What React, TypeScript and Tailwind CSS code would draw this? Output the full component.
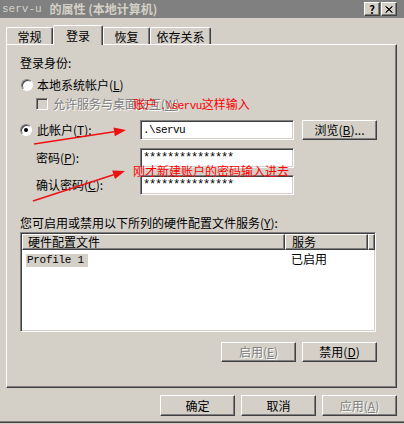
const raised =
  "border border-t-white border-l-white border-r-[#404040] border-b-[#404040] shadow-[inset_-1px_-1px_0_#808080]";
const sunken =
  "border border-t-[#808080] border-l-[#808080] border-r-white border-b-white shadow-[inset_1px_1px_0_#404040,inset_-1px_-1px_0_#d4d0c8]";
const mono = "font-['Liberation_Mono',monospace]";
const grayText = "text-[#808080] [text-shadow:1px_1px_0_#ffffff]";

function Key({ k }: { k: string }) {
  return (
    <>
      (<span className="underline underline-offset-1">{k}</span>)
    </>
  );
}

function Radio({ checked }: { checked?: boolean }) {
  return (
    <span className="flex h-[12px] w-[12px] items-center justify-center rounded-full border border-t-[#808080] border-l-[#808080] border-r-white border-b-white bg-white shadow-[inset_1px_1px_0_#404040]">
      {checked && <span className="h-[4px] w-[4px] rounded-full bg-black" />}
    </span>
  );
}

function Button({
  label,
  disabled,
  className,
}: {
  label: React.ReactNode;
  disabled?: boolean;
  className?: string;
}) {
  return (
    <div
      className={`flex w-[75px] items-center justify-center bg-[#d4d0c8] ${raised} ${
        disabled ? grayText : "text-black"
      } ${className ?? "h-[20px]"}`}
    >
      {label}
    </div>
  );
}

function Edit({ value, stars }: { value: string; stars?: boolean }) {
  return (
    <div
      className={`flex h-[20px] w-[154px] items-center bg-white pl-[2px] ${sunken} ${mono} ${
        stars ? "text-[12px] tracking-[-1.2px]" : "text-[11px] tracking-[-0.6px]"
      }`}
    >
      {value}
    </div>
  );
}

function Tab({ label, active, w }: { label: string; active?: boolean; w: string }) {
  return (
    <div
      className={`flex items-center justify-center rounded-t-[2px] border-t border-l border-r border-t-white border-l-white border-r-[#404040] bg-[#d4d0c8] pt-[1px] shadow-[inset_-1px_0_0_#808080] ${w} ${
        active ? "relative z-10 -mb-[1px] h-[20px]" : "h-[17px]"
      }`}
    >
      {label}
    </div>
  );
}

export default function App() {
  return (
    <div className="relative flex h-[424px] w-[404px] flex-col overflow-hidden bg-[#d4d0c8] font-['Noto_Sans_CJK_SC',sans-serif] text-[12px] leading-[14px] text-black">
      {/* title bar */}
      <div className="flex h-[18px] items-center bg-[#808080] pl-[2px] pr-[7px] text-[#d4d0c8]">
        <span className={`${mono} text-[11px]`}>serv-u</span>
        <span className="ml-[8px] font-bold">的属性 (本地计算机)</span>
        <div className="ml-auto flex gap-[1px]">
          <div className={`flex h-[14px] w-[16px] items-center justify-center bg-[#d4d0c8] ${raised} text-[11px] font-bold leading-none text-black`}>
            ?
          </div>
          <div className={`flex h-[14px] w-[16px] items-center justify-center bg-[#d4d0c8] ${raised}`}>
            <svg width="8" height="7" viewBox="0 0 8 7">
              <path d="M0.5 0.5 L7 6.5 M1.5 0.5 L7.5 6.5 M7 0.5 L0.5 6.5 M7.5 0.5 L1 6.5" stroke="#000" strokeWidth="1" />
            </svg>
          </div>
        </div>
      </div>

      {/* tabs */}
      <div className="mt-[7px] flex h-[19px] items-end pl-[6px]">
        <Tab label="常规" w="w-[47px]" />
        <Tab label="登录" w="w-[50px]" active />
        <Tab label="恢复" w="w-[47px]" />
        <Tab label="依存关系" w="w-[61px]" />
      </div>

      {/* panel */}
      <div className={`ml-[6px] flex h-[344px] w-[391px] flex-col pl-[13px] pr-[19px] pt-[11px] ${raised} bg-[#d4d0c8]`}>
        <div className="h-[14px]">登录身份:</div>

        <div className="mt-[8px] flex h-[14px] items-center">
          <span className="ml-[1px]">
            <Radio />
          </span>
          <span className="ml-[4px]">
            本地系统帐户<Key k="L" />
          </span>
        </div>

        <div className="mt-[5px] flex h-[14px] items-center pl-[16px]">
          <span className={`h-[12px] w-[12px] ${sunken}`} />
          <span className={`ml-[5px] ${grayText}`}>
            允许服务与桌面交互<Key k="W" />
          </span>
        </div>

        <div className="mt-[9px] flex h-[20px] items-center">
          <div className="flex w-[120px] items-center">
            <Radio checked />
            <span className="ml-[5px]">
              此帐户<Key k="T" />:
            </span>
          </div>
          <Edit value=".\servu" />
          <Button
            className="ml-[8px] h-[20px]"
            label={
              <span>
                浏览<Key k="B" />...
              </span>
            }
          />
        </div>

        <div className="mt-[8px] flex h-[20px] items-center">
          <div className="w-[120px] pl-[16px]">
            密码<Key k="P" />:
          </div>
          <Edit value="***************" stars />
        </div>

        <div className="mt-[7px] flex h-[20px] items-center">
          <div className="w-[120px] pl-[16px]">
            确认密码<Key k="C" />:
          </div>
          <Edit value="***************" stars />
        </div>

        <div className="mt-[21px] h-[14px]">
          您可启用或禁用以下所列的硬件配置文件服务<Key k="Y" />:
        </div>

        <div className={`mt-[2px] flex h-[100px] w-[356px] flex-col bg-white ${sunken}`}>
          <div className="ml-[1px] mt-[1px] flex h-[16px]">
            <div className={`flex w-[263px] items-center pl-[5px] bg-[#d4d0c8] ${raised}`}>硬件配置文件</div>
            <div className={`flex w-[83px] items-center pl-[6px] bg-[#d4d0c8] ${raised}`}>服务</div>
            <div className={`flex-1 bg-[#d4d0c8] ${raised}`} />
          </div>
          <div className="mt-[2px] ml-[1px] flex h-[13px] items-center">
            <div className="w-[263px] pl-[4px]">
              <span className={`inline-block h-[13px] w-[62px] bg-[#d4d0c8] pl-[1px] ${mono} text-[11px] leading-[13px] tracking-[-0.3px]`}>
                Profile 1
              </span>
            </div>
            <div className="pl-[6px]">已启用</div>
          </div>
        </div>

        <div className="mt-[10px] flex justify-end gap-[6px]">
          <Button
            disabled
            label={
              <span>
                启用<Key k="E" />
              </span>
            }
          />
          <Button
            label={
              <span>
                禁用<Key k="D" />
              </span>
            }
          />
        </div>
      </div>

      {/* dialog buttons */}
      <div className="mt-[7px] flex justify-end gap-[6px] pr-[7px]">
        <Button className="h-[21px]" label="确定" />
        <Button className="h-[21px]" label="取消" />
        <Button
          className="h-[21px]"
          disabled
          label={
            <span>
              应用<Key k="A" />
            </span>
          }
        />
      </div>

      <div className="mt-auto mb-[1px] h-[2px] border-b border-b-[#404040] bg-[#808080]" />

      {/* red annotations drawn over the dialog */}
      <div className="absolute left-[133px] top-[97px] whitespace-nowrap text-[12px] leading-[14px] text-[#ff0000]">
        账户 <span className={`${mono} text-[11px] tracking-[-0.6px]`}>.\servu</span>这样输入
      </div>
      <div className="absolute left-[133px] top-[164px] whitespace-nowrap text-[12px] leading-[14px] text-[#ff0000]">
        刚才新建账户的密码输入进去
      </div>
      <svg className="pointer-events-none absolute inset-0" width="404" height="424">
        <line x1="34" y1="144" x2="114.1" y2="131.8" stroke="#ee1111" strokeWidth="1.5" />
        <polygon points="126,130 114.8,136.3 113.5,127.4" fill="#ee1111" />
        <line x1="33" y1="201" x2="113.6" y2="174.7" stroke="#ee1111" strokeWidth="1.5" />
        <polygon points="125,171 115,179 112.2,170.4" fill="#ee1111" />
      </svg>
    </div>
  );
}
